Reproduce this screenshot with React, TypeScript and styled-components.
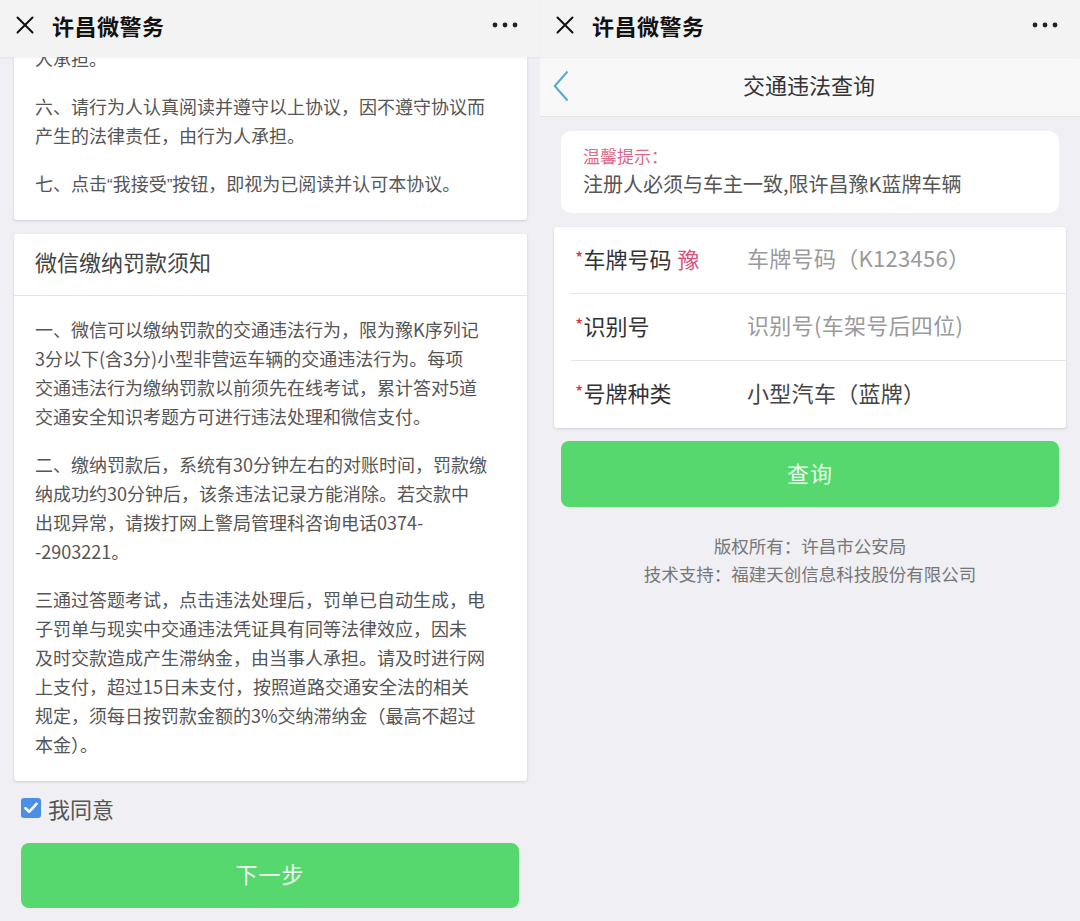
import React from 'react';
import styled, { createGlobalStyle } from 'styled-components';

const GlobalStyle = createGlobalStyle`
	html, body {
		margin: 0;
		padding: 0;
		background: #efeff4;
	}
	body {
		font-family: "Noto Sans CJK SC", "Noto Sans", sans-serif;
		color: #333;
	}
	* {
		box-sizing: border-box;
	}
`;

const Screen = styled.div`
	display: flex;
	width: 1080px;
	height: 921px;
	overflow: hidden;
	background: #efeff4;
`;

const Panel = styled.div`
	display: flex;
	flex-direction: column;
	width: 540px;
	height: 100%;
`;

const TopBar = styled.div`
	display: flex;
	align-items: center;
	flex: 0 0 57px;
	height: 57px;
	padding: 0 22px 7px 16px;
	background: #f3f3f3;
	position: relative;
	z-index: 2;
	box-shadow: 0 1px 2px rgba(0, 0, 0, 0.05);
`;

const TopTitle = styled.div`
	flex: 1;
	margin-left: 18px;
	font-size: 22px;
	line-height: 30px;
	font-weight: 700;
	color: #111;
	letter-spacing: 0.5px;
`;

const Body = styled.div`
	flex: 1;
	overflow: hidden;
	display: flex;
	flex-direction: column;
`;

const Card = styled.div<{ $offset?: number }>`
	margin: ${p => p.$offset ?? 14}px 13px 0 14px;
	background: #fff;
	border-radius: 3px;
	box-shadow: 0 1px 3px rgba(0, 0, 0, 0.14);
`;

const CardHead = styled.div`
	height: 62px;
	display: flex;
	align-items: center;
	padding: 0 21px 7px;
	font-size: 22px;
	line-height: 30px;
	color: #444;
	border-bottom: 1px solid #e4e4e4;
`;

const CardText = styled.div`
	padding: 19px 21px 22px;
	display: flex;
	flex-direction: column;
	gap: 19px;
`;

const Para = styled.p`
	margin: 0;
	font-size: 18px;
	line-height: 29px;
	color: #555;
`;

const Line = styled.span`
	display: block;
	height: 29px;
	white-space: nowrap;
`;

const Quote = styled.span`
	font-family: "Liberation Sans", sans-serif;
	font-size: 17px;
	line-height: 0;
`;

const AgreeRow = styled.label`
	display: flex;
	align-items: center;
	height: 30px;
	margin: 14px 0 0 21px;
	font-size: 22px;
	line-height: 30px;
	color: #555;
	gap: 7px;
`;

const AgreeText = styled.span`
	margin-top: -5px;
`;

const Box = styled.span`
	display: inline-flex;
	align-items: center;
	justify-content: center;
	width: 20px;
	height: 20px;
	border-radius: 3px;
	background: #4a8fe6;
	margin-top: -4px;
`;

const GreenButton = styled.div<{ $top: number; $height: number }>`
	margin: ${p => p.$top}px 21px 0 21px;
	height: ${p => p.$height}px;
	padding-bottom: 5px;
	border-radius: 8px;
	background: #56d86e;
	display: flex;
	align-items: center;
	justify-content: center;
	font-size: 22px;
	line-height: 30px;
	color: rgba(255, 255, 255, 0.92);
	letter-spacing: 1px;
`;

const NavBar = styled.div`
	flex: 0 0 60px;
	height: 60px;
	display: flex;
	align-items: center;
	position: relative;
	background: #f8f8f8;
	border-bottom: 1px solid #e3e3e3;
	padding: 0 0 2px 13px;
`;

const NavTitle = styled.div`
	position: absolute;
	left: 0;
	right: 0;
	top: 12px;
	text-align: center;
	font-size: 22px;
	line-height: 30px;
	color: #333;
	pointer-events: none;
	padding-right: 2px;
`;

const Tip = styled.div`
	margin: 14px 21px 0;
	padding: 12px 22px 14px;
	background: #fff;
	border-radius: 10px;
`;

const TipHead = styled.div`
	font-size: 17px;
	line-height: 26px;
	color: #e0698a;
`;

const TipText = styled.div`
	font-size: 20px;
	line-height: 30px;
	color: #555;
`;

const Form = styled.div`
	margin: 14px 14px 0;
	background: #fff;
	border-radius: 3px;
	box-shadow: 0 1px 3px rgba(0, 0, 0, 0.14);
`;

const FormRow = styled.div<{ $last?: boolean }>`
	display: flex;
	align-items: center;
	height: 67px;
	margin-left: 17px;
	padding: 0 0 6px 4px;
	border-bottom: ${p => (p.$last ? 'none' : '1px solid #e6e6e6')};
	font-size: 22px;
	line-height: 30px;
`;

const Label = styled.div`
	width: 172px;
	color: #333;
	white-space: nowrap;
`;

const Star = styled.span`
	color: #e0323c;
	font-size: 18px;
	vertical-align: 3px;
`;

const Province = styled.span`
	color: #d9527f;
	margin-left: 6px;
`;

const Value = styled.div<{ $placeholder?: boolean }>`
	color: ${p => (p.$placeholder ? '#9a9a9a' : '#444')};
	white-space: nowrap;
	letter-spacing: 0.3px;
`;

const Footer = styled.div`
	margin-top: 25px;
	text-align: center;
	font-size: 17.5px;
	line-height: 28px;
	color: #777;
`;

const CloseIcon = () => (
	<svg width="18" height="18" viewBox="0 0 18 18">
		<path d="M1.5 1.5 L16.5 16.5 M16.5 1.5 L1.5 16.5" stroke="#111" strokeWidth="2" strokeLinecap="round" />
	</svg>
);

const MoreIcon = () => (
	<svg width="26" height="6" viewBox="0 0 26 6">
		<circle cx="3" cy="3" r="2.4" fill="#222" />
		<circle cx="13" cy="3" r="2.4" fill="#222" />
		<circle cx="23" cy="3" r="2.4" fill="#222" />
	</svg>
);

const BackIcon = () => (
	<svg width="16" height="32" viewBox="0 0 16 32">
		<polyline points="14.5,1.5 1.8,16 14.5,30.5" fill="none" stroke="#55a8cf" strokeWidth="2" />
	</svg>
);

const CheckIcon = () => (
	<svg width="14" height="12" viewBox="0 0 14 12">
		<path d="M1.5 6.2 L5.2 9.8 L12.5 1.8" fill="none" stroke="#fff" strokeWidth="2.6" strokeLinecap="round" strokeLinejoin="round" />
	</svg>
);

const Top = () => (
	<TopBar>
		<CloseIcon />
		<TopTitle>许昌微警务</TopTitle>
		<MoreIcon />
	</TopBar>
);

// curly quotes are narrow in the original, so they get a latin font
const renderLine = (text: string) =>
	text.split(/([“”])/).map((part, i) =>
		part === '“' || part === '”' ? <Quote key={i}>{part}</Quote> : part
	);

const Paragraphs: React.FunctionComponent<{ items: string[][] }> = ({ items }) => (
	<CardText>
		{items.map((lines, i) => (
			<Para key={i}>
				{lines.map(l => (
					<Line key={l}>{renderLine(l)}</Line>
				))}
			</Para>
		))}
	</CardText>
);

const agreement = [
	['人承担。'],
	['六、请行为人认真阅读并遵守以上协议，因不遵守协议而', '产生的法律责任，由行为人承担。'],
	['七、点击“我接受”按钮，即视为已阅读并认可本协议。']
];

const notice = [
	[
		'一、微信可以缴纳罚款的交通违法行为，限为豫K序列记',
		'3分以下(含3分)小型非营运车辆的交通违法行为。每项',
		'交通违法行为缴纳罚款以前须先在线考试，累计答对5道',
		'交通安全知识考题方可进行违法处理和微信支付。'
	],
	[
		'二、缴纳罚款后，系统有30分钟左右的对账时间，罚款缴',
		'纳成功约30分钟后，该条违法记录方能消除。若交款中',
		'出现异常，请拨打网上警局管理科咨询电话0374-',
		'-2903221。'
	],
	[
		'三通过答题考试，点击违法处理后，罚单已自动生成，电',
		'子罚单与现实中交通违法凭证具有同等法律效应，因未',
		'及时交款造成产生滞纳金，由当事人承担。请及时进行网',
		'上支付，超过15日未支付，按照道路交通安全法的相关',
		'规定，须每日按罚款金额的3%交纳滞纳金（最高不超过',
		'本金）。'
	]
];

const App: React.FunctionComponent<{}> = () => {
	return (
		<Screen>
			<GlobalStyle />
			<Panel>
				<Top />
				<Body>
					<Card $offset={-32}>
						<Paragraphs items={agreement} />
					</Card>
					<Card>
						<CardHead>微信缴纳罚款须知</CardHead>
						<Paragraphs items={notice} />
					</Card>
					<AgreeRow>
						<Box>
							<CheckIcon />
						</Box>
						<AgreeText>我同意</AgreeText>
					</AgreeRow>
					<GreenButton $top={18} $height={65}>
						下一步
					</GreenButton>
				</Body>
			</Panel>
			<Panel>
				<Top />
				<NavBar>
					<BackIcon />
					<NavTitle>交通违法查询</NavTitle>
				</NavBar>
				<Body>
					<Tip>
						<TipHead>温馨提示：</TipHead>
						<TipText>注册人必须与车主一致,限许昌豫K蓝牌车辆</TipText>
					</Tip>
					<Form>
						<FormRow>
							<Label>
								<Star>*</Star>车牌号码<Province>豫</Province>
							</Label>
							<Value $placeholder>车牌号码（K123456）</Value>
						</FormRow>
						<FormRow>
							<Label>
								<Star>*</Star>识别号
							</Label>
							<Value $placeholder>识别号(车架号后四位)</Value>
						</FormRow>
						<FormRow $last>
							<Label>
								<Star>*</Star>号牌种类
							</Label>
							<Value>小型汽车（蓝牌）</Value>
						</FormRow>
					</Form>
					<GreenButton $top={13} $height={66}>
						查询
					</GreenButton>
					<Footer>
						<div>版权所有：许昌市公安局</div>
						<div>技术支持：福建天创信息科技股份有限公司</div>
					</Footer>
				</Body>
			</Panel>
		</Screen>
	);
};

export default App;
